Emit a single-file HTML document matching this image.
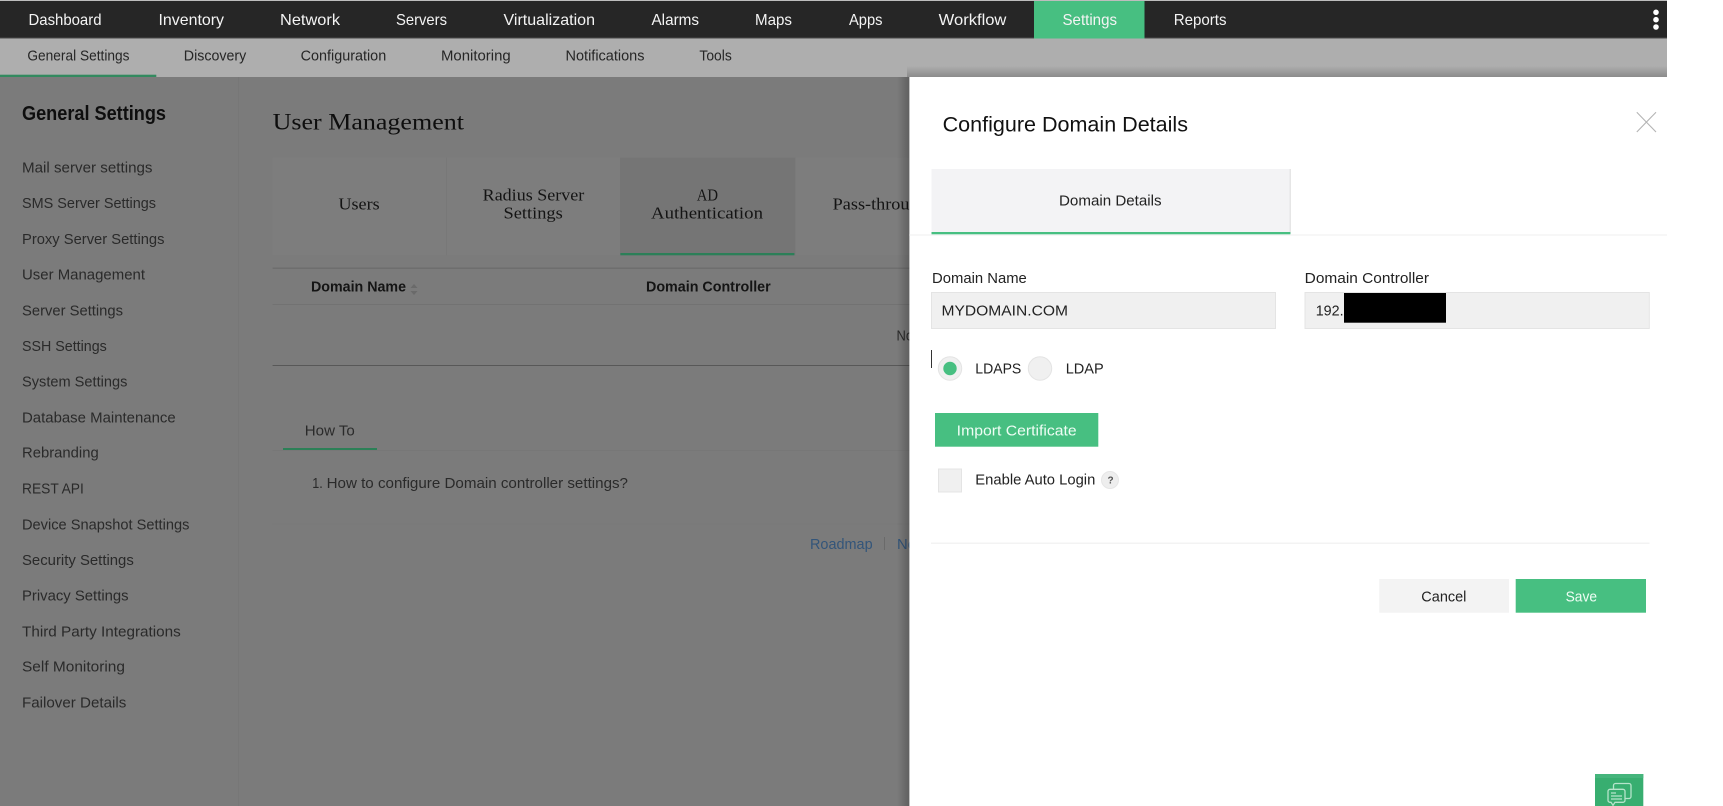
<!DOCTYPE html>
<html lang="en">
<head>
<meta charset="utf-8">
<title>Configure Domain Details</title>
<style>
html,body{margin:0;padding:0;background:#fff;width:1723px;height:806px;overflow:hidden}
svg{display:block;position:absolute;left:0;top:0}
text{font-family:"Liberation Sans",Arial,sans-serif;white-space:pre}
.n{font-size:16px;fill:#f4f4f4}
.s{font-size:14.5px;fill:#262626}
.l{font-size:15px;fill:#2a2a2a}
.b{font-size:15px;fill:#141414;font-weight:bold}
.f{font-family:"Liberation Serif",serif;font-size:17px;fill:#141414}
.m{font-size:15px;fill:#222}
</style>
</head>
<body>
<svg width="1723" height="806" viewBox="0 0 1723 806" xmlns="http://www.w3.org/2000/svg">
<defs>
<linearGradient id="sl" x1="0" x2="1" y1="0" y2="0"><stop offset="0" stop-color="#000" stop-opacity="0"/><stop offset="1" stop-color="#000" stop-opacity=".22"/></linearGradient>
<linearGradient id="st" x1="0" x2="0" y1="0" y2="1"><stop offset="0" stop-color="#000" stop-opacity="0"/><stop offset="1" stop-color="#000" stop-opacity=".2"/></linearGradient>
</defs>
<rect width="1723" height="806" fill="#fff"/>
<!-- page -->
<rect x="0" y="0" width="1667" height="806" fill="#7b7b7b"/>
<rect x="0" y="0" width="1667" height="1" fill="#bdbdbd"/>
<rect x="0" y="1" width="1667" height="37" fill="#262626"/>
<rect x="0" y="37.5" width="1667" height="1" fill="#4a4a4a"/>
<rect x="0" y="38.5" width="1667" height="38.5" fill="#aeaeae"/>
<rect x="1034" y="1" width="110.500" height="37.500" fill="#47bf81"/>
<g>
<text class="n" x="28.500" y="25" textLength="73" lengthAdjust="spacingAndGlyphs">Dashboard</text>
<text class="n" x="158.500" y="25" textLength="65.500" lengthAdjust="spacingAndGlyphs">Inventory</text>
<text class="n" x="280" y="25" textLength="60" lengthAdjust="spacingAndGlyphs">Network</text>
<text class="n" x="396" y="25" textLength="51" lengthAdjust="spacingAndGlyphs">Servers</text>
<text class="n" x="503.500" y="25" textLength="91.500" lengthAdjust="spacingAndGlyphs">Virtualization</text>
<text class="n" x="651.500" y="25" textLength="47.500" lengthAdjust="spacingAndGlyphs">Alarms</text>
<text class="n" x="755" y="25" textLength="37" lengthAdjust="spacingAndGlyphs">Maps</text>
<text class="n" x="849" y="25" textLength="33.500" lengthAdjust="spacingAndGlyphs">Apps</text>
<text class="n" x="938.700" y="25" textLength="67.700" lengthAdjust="spacingAndGlyphs">Workflow</text>
<text class="n" x="1062.500" y="25" textLength="54.500" lengthAdjust="spacingAndGlyphs">Settings</text>
<text class="n" x="1173.700" y="25" textLength="52.800" lengthAdjust="spacingAndGlyphs">Reports</text>
</g>
<circle cx="1656" cy="12.300" r="2.800" fill="#fff"/>
<circle cx="1656" cy="19.700" r="2.800" fill="#fff"/>
<circle cx="1656" cy="27" r="2.800" fill="#fff"/>
<!-- sub nav -->
<text class="s" x="27.400" y="60.500" textLength="102.100" lengthAdjust="spacingAndGlyphs">General Settings</text>
<text class="s" x="183.800" y="60.500" textLength="62.500" lengthAdjust="spacingAndGlyphs">Discovery</text>
<text class="s" x="300.600" y="60.500" textLength="85.600" lengthAdjust="spacingAndGlyphs">Configuration</text>
<text class="s" x="441" y="60.500" textLength="69.700" lengthAdjust="spacingAndGlyphs">Monitoring</text>
<text class="s" x="565.500" y="60.500" textLength="79" lengthAdjust="spacingAndGlyphs">Notifications</text>
<text class="s" x="699.400" y="60.500" textLength="32.400" lengthAdjust="spacingAndGlyphs">Tools</text>
<rect x="0" y="74.700" width="156.300" height="2.300" fill="#338a5f"/>
<!-- sidebar -->
<rect x="238" y="77" width="1" height="729" fill="#777"/>
<text x="22" y="120" font-size="20" font-weight="bold" fill="#0e0e0e" textLength="144" lengthAdjust="spacingAndGlyphs">General Settings</text>
<text class="l" x="22" y="172.500" textLength="130.500" lengthAdjust="spacingAndGlyphs">Mail server settings</text>
<text class="l" x="22" y="208" textLength="134" lengthAdjust="spacingAndGlyphs">SMS Server Settings</text>
<text class="l" x="22" y="244" textLength="142.500" lengthAdjust="spacingAndGlyphs">Proxy Server Settings</text>
<text class="l" x="22" y="279.500" textLength="123" lengthAdjust="spacingAndGlyphs">User Management</text>
<text class="l" x="22" y="315.300" textLength="101" lengthAdjust="spacingAndGlyphs">Server Settings</text>
<text class="l" x="22" y="351" textLength="84.800" lengthAdjust="spacingAndGlyphs">SSH Settings</text>
<text class="l" x="22" y="386.700" textLength="105.400" lengthAdjust="spacingAndGlyphs">System Settings</text>
<text class="l" x="22" y="422.300" textLength="153.700" lengthAdjust="spacingAndGlyphs">Database Maintenance</text>
<text class="l" x="22" y="457.700" textLength="76.700" lengthAdjust="spacingAndGlyphs">Rebranding</text>
<text class="l" x="22" y="493.300" textLength="61.800" lengthAdjust="spacingAndGlyphs">REST API</text>
<text class="l" x="22" y="529.300" textLength="167.400" lengthAdjust="spacingAndGlyphs">Device Snapshot Settings</text>
<text class="l" x="22" y="565" textLength="111.800" lengthAdjust="spacingAndGlyphs">Security Settings</text>
<text class="l" x="22" y="600.700" textLength="106.600" lengthAdjust="spacingAndGlyphs">Privacy Settings</text>
<text class="l" x="22" y="636.300" textLength="158.800" lengthAdjust="spacingAndGlyphs">Third Party Integrations</text>
<text class="l" x="22" y="671.700" textLength="103" lengthAdjust="spacingAndGlyphs">Self Monitoring</text>
<text class="l" x="22" y="707.300" textLength="104.300" lengthAdjust="spacingAndGlyphs">Failover Details</text>
<!-- main -->
<text class="f" x="272.600" y="129.500" style="font-size:23px;fill:#0e0e0e" textLength="191.400" lengthAdjust="spacingAndGlyphs">User Management</text>
<rect x="272.600" y="157.700" width="640" height="97.500" fill="#7d7d7d"/>
<rect x="446" y="157.700" width="1" height="97.500" fill="#787878"/>
<rect x="620" y="157.700" width="175.400" height="97.500" fill="#757575"/>
<rect x="620.400" y="253" width="174" height="2.300" fill="#2c7f58"/>
<text class="f" x="338.500" y="209.300" textLength="41.100" lengthAdjust="spacingAndGlyphs">Users</text>
<text class="f" x="482.700" y="200.700" textLength="101.500" lengthAdjust="spacingAndGlyphs">Radius Server</text>
<text class="f" x="503.500" y="218.700" textLength="59.300" lengthAdjust="spacingAndGlyphs">Settings</text>
<text class="f" x="696.700" y="200.700" textLength="21.300" lengthAdjust="spacingAndGlyphs">AD</text>
<text class="f" x="651" y="218.700" textLength="112" lengthAdjust="spacingAndGlyphs">Authentication</text>
<text class="f" x="832.700" y="209.300" textLength="95" lengthAdjust="spacingAndGlyphs">Pass-through</text>
<rect x="272.600" y="267.500" width="640" height="1.500" fill="#6e6e6e"/>
<text class="b" x="311" y="291.700" textLength="95" lengthAdjust="spacingAndGlyphs">Domain Name</text>
<path d="M410.500 288l3.500-4 3.500 4zM410.500 291l3.500 4 3.500-4z" fill="#6a6a6a"/>
<text class="b" x="646" y="291.700" textLength="124.700" lengthAdjust="spacingAndGlyphs">Domain Controller</text>
<rect x="272.600" y="304" width="640" height="1" fill="#727272"/>
<text class="l" x="896.500" y="340.700" textLength="100" lengthAdjust="spacingAndGlyphs">No data available</text>
<rect x="272.600" y="365" width="640" height="1" fill="#585858"/>
<text class="l" x="304.800" y="435.500" textLength="50" lengthAdjust="spacingAndGlyphs">How To</text>
<rect x="272.600" y="450" width="640" height="1" fill="#777"/>
<rect x="283" y="448" width="94" height="2" fill="#2c8057"/>
<text class="l" x="312.300" y="488" textLength="10.500" lengthAdjust="spacingAndGlyphs">1.</text>
<text class="l" x="326.600" y="488" textLength="301.400" lengthAdjust="spacingAndGlyphs">How to configure Domain controller settings?</text>
<rect x="272.600" y="523.500" width="640" height="1" fill="#787878"/>
<text class="l" x="810" y="549" style="fill:#33557a" textLength="62.600" lengthAdjust="spacingAndGlyphs">Roadmap</text>
<rect x="884" y="537" width="1" height="13" fill="#6a6a6a"/>
<text class="l" x="897" y="549" style="fill:#33557a" textLength="70" lengthAdjust="spacingAndGlyphs">Newsletter</text>
<!-- modal shadow -->
<rect x="897" y="77" width="12.400" height="729" fill="url(#sl)"/>
<rect x="907" y="66" width="760" height="11" fill="url(#st)"/>
<!-- modal -->
<rect x="909.400" y="77" width="813.600" height="729" fill="#fff"/>
<text x="942.600" y="131.700" font-size="21" fill="#111" textLength="245.400" lengthAdjust="spacingAndGlyphs">Configure Domain Details</text>
<path d="M1636.800 112.200L1656 132M1656 112.200L1636.800 132" stroke="#b4b4b4" stroke-width="1.100" fill="none"/>
<rect x="909.400" y="234" width="757.600" height="2" fill="#f7f7f7"/>
<rect x="931.500" y="169" width="358.900" height="65.300" fill="#f3f3f5"/>
<rect x="1289.700" y="169" width="1" height="65" fill="#dcdcdc"/>
<rect x="931.500" y="232" width="358.900" height="2.300" fill="#47bf81"/>
<text class="m" x="1059" y="205.700" textLength="102.600" lengthAdjust="spacingAndGlyphs">Domain Details</text>
<text class="m" x="932" y="283" textLength="94.800" lengthAdjust="spacingAndGlyphs">Domain Name</text>
<text class="m" x="1304.700" y="283" textLength="124.300" lengthAdjust="spacingAndGlyphs">Domain Controller</text>
<rect x="931.500" y="292.500" width="344" height="36" fill="#f0f0f0" stroke="#e4e4e4"/>
<rect x="1305" y="292.500" width="344.300" height="36" fill="#f0f0f0" stroke="#e4e4e4"/>
<text class="m" x="941.500" y="315.300" textLength="126.500" lengthAdjust="spacingAndGlyphs">MYDOMAIN.COM</text>
<text class="m" x="1315.700" y="315.300" textLength="27.900" lengthAdjust="spacingAndGlyphs">192.</text>
<rect x="1344" y="293" width="102" height="29.700" fill="#000"/>
<rect x="931" y="350" width="1" height="18" fill="#333"/>
<circle cx="950" cy="368.500" r="11.700" fill="#f0f0f0" stroke="#e4e4e4"/>
<circle cx="950" cy="368.500" r="6.700" fill="#47bf81"/>
<text class="m" x="975.300" y="373.500" textLength="46" lengthAdjust="spacingAndGlyphs">LDAPS</text>
<circle cx="1040" cy="368.500" r="11.700" fill="#f0f0f0" stroke="#e4e4e4"/>
<text class="m" x="1065.700" y="373.500" textLength="38" lengthAdjust="spacingAndGlyphs">LDAP</text>
<rect x="935" y="413" width="163.300" height="33.700" fill="#47bf81"/>
<text x="956.700" y="435.700" font-size="15" fill="#eefdf4" textLength="120" lengthAdjust="spacingAndGlyphs">Import Certificate</text>
<rect x="938.500" y="469" width="23" height="23" fill="#f0f0f0" stroke="#e4e4e4"/>
<text class="m" x="975.300" y="484.300" textLength="120" lengthAdjust="spacingAndGlyphs">Enable Auto Login</text>
<circle cx="1110" cy="480" r="8.500" fill="#eee" stroke="#e6e6e6"/>
<text x="1107.500" y="483.500" font-size="10" font-weight="bold" fill="#555">?</text>
<rect x="931" y="542.500" width="718.500" height="1.500" fill="#f3f3f3"/>
<rect x="1379.300" y="579" width="129.700" height="33.700" fill="#f3f3f3"/>
<text class="m" x="1421.300" y="601.500" textLength="45.100" lengthAdjust="spacingAndGlyphs">Cancel</text>
<rect x="1515.700" y="579" width="130.300" height="33.700" fill="#47bf81"/>
<text x="1565.600" y="601.500" font-size="15" fill="#eefdf4" textLength="31.400" lengthAdjust="spacingAndGlyphs">Save</text>
<!-- chat -->
<rect x="1595" y="774" width="48.300" height="32" fill="#38ae70"/>
<rect x="1595" y="774" width="48.300" height="4" fill="#45b57c"/>
<g fill="none" stroke="#b6e4cb" stroke-width="1.300">
<path d="M1613.500 789v-3.500a2 2 0 0 1 2-2h13.500a2 2 0 0 1 2 2v11a2 2 0 0 1-2 2h-4"/>
<path d="M1610 789.300h13a2 2 0 0 1 2 2v9a2 2 0 0 1-2 2h-8l-2 3-2-3h-1a2 2 0 0 1-2-2v-9a2 2 0 0 1 2-2z"/>
</g>
<path d="M1611 793h5M1611 796h11M1611 799h11" stroke="#b6e4cb" stroke-width="1.300" fill="none"/>
</svg>
</body>
</html>
